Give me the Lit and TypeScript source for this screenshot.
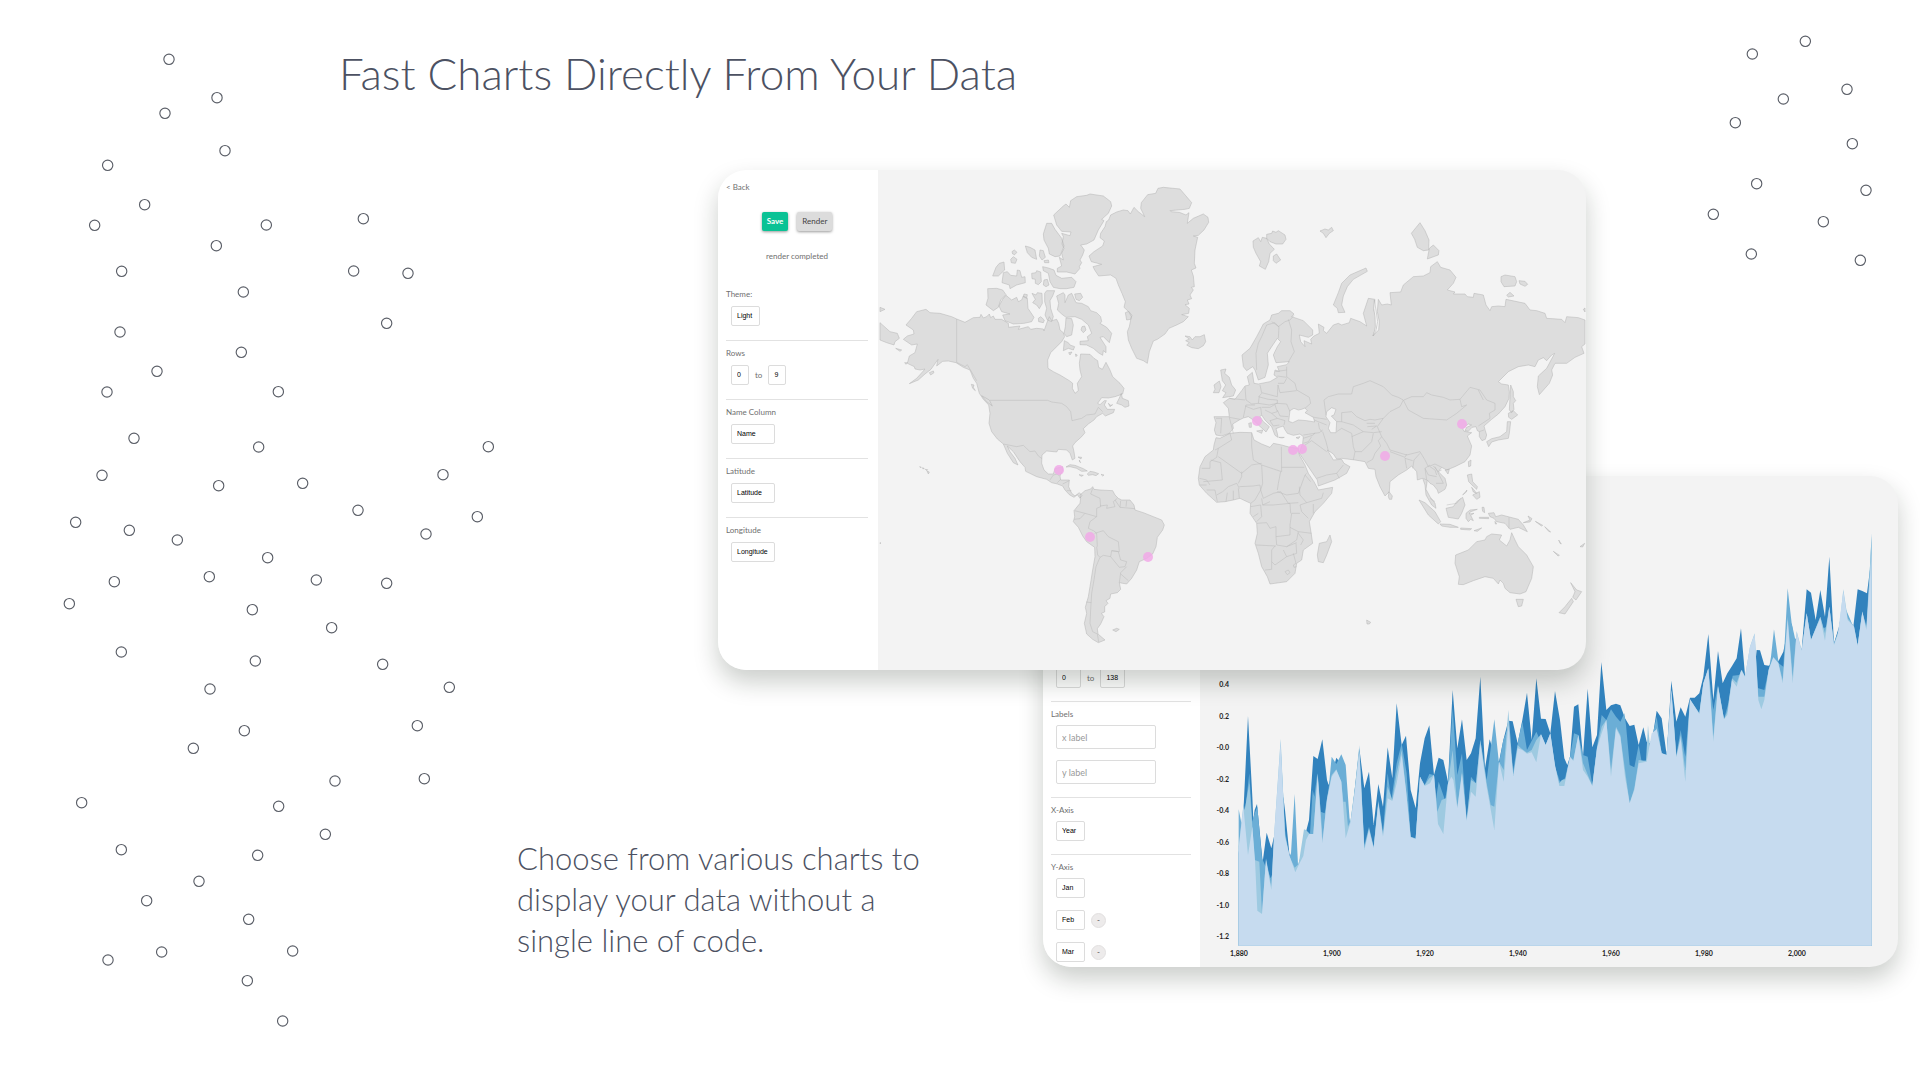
import { LitElement, html, svg, css } from "lit";
import { customElement } from "lit/decorators.js";

type Pt = [number, number];

const pairs = (s: string): Pt[] =>
  s.trim().split(/\s+/).map((p) => p.split(",").map(Number) as Pt);

/* ---------- decorative dots ---------- */

const DOTS_LEFT = pairs(`
327,58 471,173 315,220 495,332 143,376 254,494 104,556 619,555 469,617 185,694 550,756 910,536
881,693 1044,700 980,850 180,876 544,937 291,994 141,1056 655,1055 222,1195 596,1221 1285,1220
126,1306 476,1337 728,1330 1149,1304 894,1411 1252,1430 47,1447 208,1471 1098,1482 352,1500
623,1553 163,1625 448,1610 769,1620 980,1630 28,1691 577,1709 815,1763 184,1836 586,1863 968,1873
450,1947 1168,1942 1072,2057 553,2072 400,2125 825,2223 1093,2216 65,2288 656,2299 796,2383
184,2429 593,2446 417,2524 260,2582 566,2638 698,2733 305,2736 144,2760 562,2822 668,2943`);

const DOTS_RIGHT = pairs(`
157,162 316,124 250,297 441,268 106,368 457,431 170,551 498,571 40,643 370,665 154,762 481,781`);

/* ---------- world map ---------- */

const AMERICAS = `
M709,155 716,150 722,135 740,126 760,120 774,122 781,132 792,112 805,125 824,140 812,115 814,98 833,74 857,70 864,55 880,52 930,57 948,78 965,98 958,115 945,118 900,122 903,125 928,127 948,135 957,128 952,160 970,145 1000,132 1014,142 1016,157 1002,180 985,196 970,198 983,202 975,240 973,280 978,294 964,300 970,318 973,350 964,352 970,360 960,375 965,386 952,390 957,402 945,404 958,415 956,430 935,434 955,440 940,455 920,465 897,475 885,492 862,508 850,513 838,545 832,580 820,572 800,565 785,535 775,510 772,485 778,470 784,440 776,425 762,412 766,395 756,370 745,345 738,325 722,315 686,318 674,300 669,290 695,283 664,275 657,258 672,245 698,228 703,213 690,203 692,190 705,170Z
M766,428 776,424 786,436 782,448 770,450Z
M945,498 960,500 967,510 975,500 990,500 1003,494 1007,515 1000,527 985,536 965,533 950,525 958,518 947,512 958,507Z
M551,135 580,108 588,102 598,112 602,92 620,80 650,76 660,72 700,78 722,95 725,108 715,130 695,148 702,152 685,180 672,210 650,222 632,225 643,240 638,255 630,270 635,278 628,290 630,295 615,312 590,306 562,306 562,295 575,288 568,262 580,270 575,250 582,235 576,222 580,200 575,190 600,197 603,186 575,184 560,165Z
M530,160 545,160 555,178 575,205 582,228 570,258 555,260 538,252 535,235 522,210 520,192Z
M466,228 480,232 495,240 500,268 485,262 472,248Z M510,240 520,242 526,262 516,270 508,258Z M522,272 535,270 537,278 524,278Z
M426,245 433,240 441,247 434,254 428,252Z M422,268 430,260 441,268 436,280 424,278Z M402,276 404,300 385,318 368,318 378,292 388,280Z
M400,308 412,305 422,316 440,318 442,300 450,302 455,322 465,320 466,338 440,345 420,356 418,345 396,338Z
M485,310 498,308 500,302 512,306 514,335 505,344 496,340 496,328 486,326Z M522,330 532,328 537,345 528,350 520,345Z
M518,290 535,294 552,300 558,316 575,325 605,322 618,335 612,352 590,356 570,356 550,352 540,335 535,310 520,302Z
M353,356 380,355 398,360 408,374 392,390 385,412 370,422 348,405 354,385Z
M408,376 425,390 440,382 445,395 455,390 460,378 472,385 474,415 492,442 485,455 462,460 430,462 405,452 398,435 420,432 395,425 387,408 398,388Z
M462,372 472,374 470,385 460,380Z M486,370 498,375 502,368 516,370 517,400 508,416 500,405 488,398 496,388Z
M524,370 530,362 554,362 548,378 540,392 542,415 550,440 545,455 532,450 525,435 530,415 524,395Z M505,445 512,440 523,450 520,458 506,455Z
M560,378 580,368 585,375 585,398 595,375 605,370 612,385 618,398 635,400 655,410 662,422 680,428 692,440 695,455 690,460 710,472 725,490 718,518 700,500 690,502 708,530 708,548 700,542 698,556 685,548 670,535 650,525 630,524 630,514 655,512 652,500 665,490 655,465 635,448 615,440 588,442 575,432 562,420 566,400Z
M614,372 632,370 638,382 628,392 618,388Z M636,470 644,468 648,480 640,488 633,480Z M588,444 605,446 610,465 605,495 590,500 582,490 586,470Z
M583,512 595,518 600,525 614,530 610,540 595,535 580,542Z M596,548 606,546 600,555Z M616,552 622,555 618,560Z
M168,418 180,428 210,430 245,440 260,447 285,457 310,443 330,442 333,433 340,444 350,440 358,432 362,443 370,438 375,448 395,448 415,460 416,472 450,468 445,478 475,470 482,478 500,475 520,477 522,483 530,460 538,440 545,452 560,448 566,460 570,480 580,488 584,500 575,515 560,530 542,548 533,570 534,595 550,605 570,615 598,632 608,640 607,655 615,670 625,662 622,640 635,620 630,600 628,580 632,552 660,553 672,565 683,572 686,592 697,598 708,577 720,600 728,620 750,640 762,655 758,672 735,680 715,684 695,683 683,700 690,704 703,692 709,692 703,705 712,718 734,718 730,728 706,738 698,730 680,740 672,750 655,762 640,776 645,788 635,800 615,818 608,828 612,845 615,865 607,870 600,850 590,840 565,838 560,846 530,843 516,855 515,880 522,900 535,912 550,912 555,896 578,890 577,902 570,918 572,930 598,930 596,950 605,970 615,978 628,968 636,976 630,985 622,974 612,982 598,974 585,960 578,948 562,942 545,938 530,928 500,920 467,904 465,892 450,875 430,845 412,828 420,845 435,865 444,885 430,878 412,850 400,822 382,807 365,785 357,760 360,730 356,705 340,688 328,670 320,640 310,625 300,600 280,592 258,578 235,573 218,574 200,588 204,568 183,598 165,612 145,630 118,641 140,625 158,605 165,597 150,600 135,597 133,590 112,580 118,558 135,548 142,522 125,525 100,508 112,498 132,492 130,480 108,465 125,445 140,425Z
M304,643 312,645 310,652 316,662 308,655Z M335,677 358,690 367,708 350,695Z M178,608 190,603 192,608 182,615Z
M30,458 60,485 82,490 88,505 75,515 72,525 50,518 30,510Z M77,535 95,540 90,544Z M30,412 45,418 30,425Z M104,578 112,578 108,583Z
M740,700 748,684 754,670 757,685 775,692 777,708 765,712 755,705Z M715,700 722,706 728,704 720,710Z
M588,891 600,884 615,886 640,896 652,903 635,904 620,895 600,890Z M652,912 660,904 672,906 686,911 678,917 668,914 655,916Z M627,914 640,916 634,919Z M693,913 702,915 698,918Z
M624,861 635,862 633,867Z M628,870 632,878 629,876Z M149,890 154,892 150,892Z M158,893 163,896 158,896Z M166,898 173,899 170,902Z M171,903 178,906 175,912Z
M630,975 645,962 662,957 668,950 672,958 690,960 728,962 735,975 745,985 755,990 780,990 792,1005 795,1020 820,1028 850,1040 875,1050 883,1065 878,1080 862,1102 858,1130 848,1152 830,1165 808,1175 800,1200 785,1225 770,1242 748,1238 752,1258 742,1268 722,1272 720,1285 708,1292 714,1300 704,1310 704,1326 694,1330 702,1340 692,1362 682,1376 684,1392 705,1410 685,1418 668,1408 650,1392 643,1360 650,1330 646,1312 655,1280 660,1250 668,1200 675,1160 674,1132 650,1115 638,1098 625,1072 610,1055 614,1040 612,1022 630,1000 632,985Z
M728,1380 740,1375 748,1378 738,1385Z M30,1118 33,1119 30,1121Z`;

const AMERICAS_BORDERS = `
M260,447 260,577 285,590 292,584 320,632 M360,691 533,691 545,696 575,700 590,710 602,725 606,752 635,745 650,735 675,732 685,712 698,725
M400,822 440,830 460,826 480,845 495,843 505,858 516,866 M540,930 550,915 562,912 568,918 M562,938 572,928 M578,942 598,932 M590,962 604,962
M680,1130 683,1155 690,1162 678,1190 672,1230 665,1270 662,1320 660,1360 668,1385 682,1392 686,1416
M668,955 662,972 690,985 692,1010 680,1015 680,1040 660,1055 655,1075 672,1083 680,1090 682,1130
M612,1048 630,1046 645,1030 680,1040 M614,1022 645,1030 M690,1008 712,1005 710,1015 735,1010 730,995 742,985 M735,990 750,1012 795,1016 M752,992 750,1012 M770,992 768,1010
M674,1090 700,1082 715,1100 745,1115 748,1145 725,1142 722,1160 700,1156 690,1162 M725,1142 745,1145 752,1170 770,1175 765,1190 748,1192 722,1160 M770,1190 752,1208 748,1238 M752,1212 775,1232
M648,1296 664,1298`;

const OLD_WORLD = `
M189,213 205,203 212,215 217,202 230,205 238,222 253,238 240,250 236,275 226,298 208,288 212,275 198,250 190,232Z
M230,193 245,190 248,183 258,187 265,182 285,195 288,208 278,222 258,222 240,215 230,205Z M250,258 260,252 272,270 258,280 250,272Z
M390,183 405,177 415,180 425,172 430,182 418,190 408,203 400,190Z
M430,405 445,368 455,340 480,315 528,294 532,304 490,328 472,350 460,378 455,405 465,427 445,428 442,415Z
M664,190 690,158 705,182 717,210 716,240 700,242 682,232 674,208Z M718,235 730,225 747,242 745,255 712,267Z
M933,320 945,315 975,320 980,335 975,348 942,350 933,335Z M987,332 1005,334 1013,343 1005,349 990,342Z M950,376 960,367 972,378 955,381Z M1180,418 1185,414 1185,426Z
M92,600 108,597 104,610 118,622 125,645 137,660 130,678 98,683 108,668 97,662 107,645 97,632Z M72,645 88,633 93,650 87,668 70,668 75,658Z
M156,555 180,535 200,500 220,462 240,450 245,435 265,430 275,422 300,422 312,432 305,440 340,452 368,480 368,495 355,502 328,495 332,515 345,530 342,512 365,522 362,508 372,498 388,490 385,462 402,472 400,482 410,490 430,465 445,460 455,465 478,458 482,445 510,455 530,468 520,430 535,385 555,388 552,420 560,450 558,475 548,498 566,480 568,455 562,425 565,388 575,405 592,402 604,405 600,368 632,366 640,345 670,320 700,318 720,308 722,290 742,275 752,292 780,300 798,322 790,340 772,360 795,366 790,372 825,372 832,380 850,382 852,370 880,375 888,405 900,422 905,410 925,408 945,410 948,388 1005,400 1020,420 1040,422 1065,430 1070,445 1115,448 1125,458 1130,440 1165,443 1185,450 1185,522 1175,530 1182,550 1155,562 1130,580 1095,580 1085,600 1088,615 1078,640 1048,674 1042,650 1045,618 1070,595 1094,550 1085,555 1070,572 1060,563 1045,570 1035,590 1015,585 985,590 955,605 925,635 935,642 955,645 958,665 957,685 945,710 925,732 905,748 882,768 886,782 890,795 886,808 876,812 868,800 868,785 862,782 858,770 846,772 835,784 825,782 830,772 845,765 835,762 818,776 822,784 845,788 832,798 845,828 840,855 825,875 795,890 770,900 755,892 745,905 765,925 770,945 765,958 745,970 742,960 730,945 720,940 712,930 708,958 720,980 735,1000 738,1015 725,1005 708,975 705,945 698,925 682,930 680,905 665,888 650,900 625,915 600,935 598,965 585,978 570,950 558,920 555,898 535,895 525,875 495,870 455,865 440,867 430,852 415,842 412,840 430,870 455,868 462,880 480,890 470,910 435,930 385,948 382,930 365,905 345,875 328,850 338,820 340,800 330,792 310,796 292,790 284,778 280,768 268,772 258,776 262,790 264,802 255,796 245,770 225,750 215,735 210,740 220,755 238,770 228,786 222,780 205,765 190,750 175,740 160,744 148,750 128,762 130,775 118,790 95,798 78,795 73,780 78,758 72,740 118,740 115,715 100,698 118,685 135,688 155,662 165,648 178,645 172,620 187,607 192,640 205,642 240,635 262,622 252,615 255,600 268,604 262,590 290,584 298,575 258,578 250,555 262,530 272,515 262,505 245,530 232,550 235,585 225,622 205,630 195,600 188,590 170,602 160,590Z
M78,803 90,805 120,790 150,787 185,788 192,810 215,822 240,832 250,820 275,825 300,832 325,835 328,855 345,885 355,910 372,935 385,960 428,952 425,970 400,1000 375,1025 358,1055 362,1080 368,1120 340,1140 335,1170 320,1180 315,1210 290,1235 240,1242 232,1220 215,1190 205,1150 195,1120 202,1090 200,1060 180,1030 182,1000 160,990 150,985 130,990 105,995 80,997 50,970 28,945 25,925 30,890 45,860 70,840 72,825Z
M420,1095 425,1115 410,1155 400,1178 385,1175 382,1155 388,1120 410,1115Z M597,965 607,978 605,988 598,988 595,980Z
M687,990 705,998 735,1025 752,1055 745,1062 715,1035Z M750,1062 780,1063 805,1072 780,1072 755,1068Z M768,1015 790,1010 800,995 818,982 825,1005 815,1030 805,1047 775,1042Z
M828,1030 840,1020 862,1018 840,1026 838,1032 852,1030 842,1036 850,1052 842,1048 835,1055 828,1045Z M876,1012 882,1012 884,1028 878,1024Z M868,1042 896,1042 896,1046 868,1045Z M812,1074 845,1076 840,1080 812,1078Z M852,1082 875,1074 862,1084Z
M832,915 845,912 848,935 862,950 860,958 846,945 836,935Z M848,975 868,965 870,982 860,988Z M818,975 831,960 829,966Z M845,952 852,960 860,970 850,966Z
M895,1030 912,1028 917,1040 935,1035 985,1048 1000,1065 1012,1085 985,1072 960,1078 945,1060 920,1055 912,1045 900,1040Z M1000,1058 1020,1050 1014,1038 1026,1046 1020,1056Z M1036,1054 1058,1066 1054,1068Z M1064,1070 1082,1086 1076,1084Z M1106,1110 1114,1122 1110,1120Z M1090,1144 1108,1156 1104,1158Z M1170,1130 1184,1120 1178,1131Z M915,1054 920,1062 916,1062Z
M835,875 843,870 842,888 836,890Z M765,900 778,898 774,912Z M890,815 905,806 930,800 950,785 952,755 962,755 958,790 955,805 925,810 905,816 896,830Z M955,730 970,722 983,735 965,748 956,742Z M962,645 970,665 970,680 977,692 970,700 972,718 965,728 958,720Z
M797,1155 835,1140 860,1115 885,1110 890,1100 905,1092 935,1095 928,1110 950,1128 960,1110 965,1088 975,1110 985,1130 1010,1155 1030,1190 1025,1225 1008,1265 990,1272 960,1268 945,1255 940,1240 930,1230 925,1242 910,1225 885,1220 850,1232 820,1244 805,1243 808,1220 795,1180Z
M978,1288 1000,1288 995,1308 985,1310Z M1142,1238 1160,1260 1175,1265 1158,1290 1148,1282 1155,1265Z M1145,1285 1150,1295 1125,1332 1107,1328 1125,1310Z M530,1350 542,1357 538,1362 531,1362Z
M176,760 184,758 184,772 178,772Z M200,783 218,780 215,790Z M266,802 283,802 276,804Z M318,803 330,800 325,806Z`;

const OLD_WORLD_BORDERS = `
M265,505 267,470 245,455 M200,600 198,550 205,520 215,500 230,465 255,458 265,470 285,455 300,450 312,436 M295,448 305,480 303,515 313,545 295,576
M290,590 290,620 300,628 315,640 320,660 358,682 362,700 345,715 M262,618 290,622 M256,605 290,600 M264,640 282,640 290,625 M264,645 270,668 320,662 M210,645 215,668 262,680 264,645
M165,650 168,690 185,702 205,700 208,678 215,670 M118,685 165,690 M160,742 168,705 195,705 M205,680 235,688 262,690 262,700 238,705 205,700 M165,708 190,718 212,712 215,735 M215,712 240,712 260,700 290,702 300,725 M225,720 245,730 262,745 240,752 M262,720 270,738 295,740 M255,705 262,725 245,730 M78,745 95,745 92,790 M130,790 118,742 150,748
M262,745 285,752 282,765 M240,752 250,768 268,765 M372,750 410,765 M360,740 410,748 M385,758 388,775 395,785 M340,795 388,788 398,780
M408,735 402,690 415,680 445,672 485,672 490,650 520,640 540,632 580,650 605,675 625,682 640,690 630,710 600,725 580,745 555,750 540,748 525,752 500,740 485,725 455,728 455,755 440,755
M642,690 665,680 700,680 710,668 725,675 760,682 780,690 810,688 815,710 830,705 800,730 770,750 700,745 655,720 640,690
M810,688 840,652 870,660 890,690 915,700 915,720 898,730 900,745 865,768 M868,785 882,780 M865,660 880,690
M580,745 562,770 575,800 590,820 600,840 650,855 690,845 705,870 715,890 735,882 755,892 M600,845 645,862 650,852
M575,800 565,812 572,828 555,850 548,868 530,878 M440,785 455,775 485,790 490,830 495,845 490,870 M485,800 520,785 550,788 575,785 M550,790 545,815 515,845 495,845 M455,755 490,765 520,785 M530,760 555,760 M532,770 560,768 545,778
M340,805 370,795 375,788 M340,820 355,815 365,800 M365,812 410,845 M345,825 365,812 M398,785 408,815 415,842 M380,925 410,915 440,910 460,885 M440,910 448,925
M668,895 672,870 690,850 M645,865 650,895 M645,865 668,872 M700,925 710,930 705,895 720,885 M720,890 735,900 740,915 M705,895 715,915 740,920 M738,940 760,940 M730,888 745,905 755,900 M735,890 760,940 M770,1005 800,1000 812,985 M957,1042 957,1075 M720,985 735,995
M120,790 125,810 85,835 75,840 M35,895 60,895 60,875 80,862 85,835 M85,860 155,910 185,885 215,880 M62,870 92,878 97,930 40,935 M185,788 185,830 190,870 215,885 275,905 274,830 M275,892 343,892 M272,905 265,940 262,960 M215,885 218,940 212,960 M145,940 155,920 155,905
M28,925 50,930 60,945 M30,945 50,945 M50,960 75,960 82,995 M80,975 98,965 115,950 140,940 148,955 M108,995 112,968 M130,990 130,962 M148,985 145,955 M148,950 190,948 210,945 212,960 195,990 182,1000
M212,960 220,985 250,970 272,965 M262,965 290,975 325,970 345,915 350,910 M345,915 362,935 M328,950 330,975 350,998 395,985 400,968 M370,1002 370,1030 M350,998 330,1005 335,1025 355,1045 M272,965 295,1000 325,998 M215,985 218,1005 250,1005 300,1000 302,1030
M182,1010 212,1005 215,1040 200,1055 M218,1005 240,995 M190,1040 205,1030 M200,1060 230,1058 240,1075 258,1070 258,1100 300,1095 300,1065 305,1030 330,1030 M198,1125 258,1128 M258,1100 260,1125 290,1130 320,1110 325,1085 300,1072 M325,1085 365,1090 M325,1090 340,1110 332,1125
M245,1140 245,1198 225,1200 M245,1175 255,1185 290,1160 320,1150 318,1120 M255,1128 245,1140 M290,1160 280,1140 M290,1130 320,1118 M310,1150 318,1180 M285,1205 295,1200 300,1208 292,1214Z M318,1180 310,1185 312,1192 320,1190`;

const SEAS = `
M296,754 300,722 312,715 325,720 335,718 345,714 352,722 345,728 370,742 374,756 350,752 325,750 308,758Z
M410,725 425,713 438,718 432,735 424,738 440,755 438,788 422,788 415,775 420,758 408,740Z
M553,390 558,420 563,455 557,485 550,498 556,470 555,440 551,415Z`;

const PINS = pairs("1059,470 1090,537 1148,557 1257,421 1293,450 1302,449 1385,456 1462,424");

/* ---------- area chart ---------- */

/* Each series is traced at three units per pixel: an earlier and a later stretch of years. */
const join = (early: string, late: string): string =>
  [...pairs(early), ...pairs(late).map(([x, y]) => [x + 1020, y - 510] as Pt)]
    .map(([x, y]) => `${x},${y}`)
    .join(" ");

const SERIES = [
  {
    name: "s1",
    points: join(
      `116,640 130,520 144,228 157,470 160,540 164,510 171,492 188,665 200,578 214,625 222,590 230,640 250,470 255,510 268,640 284,700 300,680 314,590 318,575 327,540 340,348 353,357 367,298 381,420 386,435 404,372 409,353 416,362 437,480 452,560 465,440 478,325 493,445 507,395 521,555 535,432 549,500 563,322 577,415 590,190 605,315 618,287 632,450 647,505 660,370 674,295 688,256 702,405 716,353 730,360 744,425 758,150 772,325 786,238 800,360 813,340 827,295 841,110 855,385 869,298 876,320 883,400 890,360 897,365 910,300 925,242 938,244 953,310 967,240 981,158 995,300 1009,115 1023,236 1037,237 1051,280`,
      `45,663 60,750 73,865 82,885 90,860 102,710 115,703 129,860 143,656 157,832 171,795 184,576 199,720 213,706 228,701 241,706 255,745 269,768 283,764 296,825 310,772 320,815 330,820 338,800 350,722 365,745 380,855 394,632 409,755 422,712 436,740 450,683 464,683 478,670 490,620 505,492 520,690 534,543 548,640 562,610 576,588 590,565 603,475 615,615 640,640 650,540 660,541 673,585 686,587 700,575 716,572 730,545 743,480 755,460 770,560 785,540 800,358 813,368 827,450 841,360 855,440 868,260 882,520 897,470 910,400 925,480 940,470 953,358 967,363 981,370 995,260`
    ),
  },
  {
    name: "s2",
    points: join(
      `116,508 124,548 132,540 148,400 157,545 164,520 172,500 186,655 196,678 200,680 212,715 218,700 230,640 242,320 255,570 268,650 273,640 284,462 294,675 305,640 318,580 330,582 338,450 343,470 352,400 362,515 374,520 386,445 395,350 409,372 424,343 437,375 450,555 465,445 478,350 493,615 507,560 521,620 535,480 549,575 563,400 574,480 590,370 605,310 620,400 632,590 647,595 660,410 674,435 688,402 702,405 706,490 716,425 735,480 744,430 758,205 772,405 786,340 800,540 813,410 828,430 841,300 860,420 869,350 883,238 897,370 910,300 925,260 938,400 955,300 967,245 981,330 1009,275 1020,300 1037,315 1051,285`,
      `45,890 60,935 75,925 90,860 102,790 115,795 129,855 143,860 157,945 171,830 185,735 199,750 213,718 228,740 241,755 253,730 258,765 269,885 283,892 296,825 305,875 320,870 330,830 350,740 365,850 380,855 394,660 409,855 422,780 436,860 450,690 478,730 490,640 505,598 520,720 534,645 552,748 565,700 578,617 598,615 606,600 616,620 640,640 655,655 673,660 686,600 693,560 702,478 716,580 730,590 743,355 755,460 765,505 772,510 785,540 800,430 813,510 841,440 850,475 860,470 868,410 882,520 897,480 910,400 940,470 953,525 967,430 981,470 995,190`
    ),
  },
  {
    name: "s3",
    points: join(
      `116,620 124,548 131,490 134,510 148,430 157,560 164,660 178,665 186,820 198,655 214,740 222,590 242,296 255,585 268,648 284,683 296,672 312,568 318,570 330,582 340,582 353,400 362,515 368,600 381,475 395,405 409,388 424,425 430,485 437,485 444,560 452,540 465,440 478,316 493,625 507,565 521,622 535,485 549,585 563,440 577,480 590,400 605,330 618,450 632,590 647,596 660,410 674,436 688,415 702,405 712,515 725,480 738,475 744,430 758,330 772,500 786,395 800,541 813,420 828,430 841,300 860,430 872,495 883,500 897,365 911,390 925,210 940,408 953,315 963,325 981,338 995,330 1009,300 1023,283 1037,315 1051,280`,
      `45,890 58,940 66,930 76,928 90,862 100,870 115,795 129,880 157,948 171,835 185,770 199,750 213,900 228,770 241,795 255,900 269,1000 283,955 296,870 318,873 324,765 330,830 350,774 365,850 380,855 394,660 409,860 422,795 436,900 450,688 478,730 490,640 505,595 520,800 534,648 552,748 562,725 576,625 590,638 604,600 615,620 630,530 644,490 655,680 664,680 673,680 686,600 700,562 715,578 728,630 743,440 758,620 770,483 785,541 800,430 813,510 841,440 855,490 868,410 882,522 897,480 910,358 923,445 942,468 953,526 967,424 979,475 995,200`
    ),
  },
  {
    name: "s4",
    points: join(
      `116,625 130,500 144,645 157,560 165,660 172,812 186,822 198,660 214,750 222,590 242,305 255,590 270,652 286,697 296,675 310,648 318,600 327,582 340,582 353,405 367,610 381,480 395,410 409,390 424,425 437,595 452,545 465,450 478,335 493,630 507,570 521,625 535,490 549,590 563,475 577,483 590,430 605,345 618,450 632,592 647,597 660,410 674,438 690,430 702,405 714,552 730,582 744,430 754,410 760,420 772,505 786,400 800,542 813,455 827,470 841,310 860,440 883,570 897,365 911,425 925,255 940,408 953,325 967,330 981,341 995,337 1009,367 1023,283 1037,315 1051,280`,
      `45,885 58,948 73,948 90,860 100,873 115,795 129,900 143,920 157,948 171,835 185,790 199,750 213,920 228,775 241,800 255,920 269,1000 283,960 296,880 320,875 335,790 350,778 365,850 380,855 394,660 409,862 422,805 436,935 450,688 478,732 490,640 505,595 520,815 534,650 552,748 562,735 576,630 590,650 604,600 615,620 630,530 644,492 655,690 664,718 673,690 686,600 700,562 715,580 728,640 743,450 758,640 770,487 785,542 800,430 813,510 841,445 855,512 868,410 882,525 893,495 910,364 923,450 942,470 953,527 967,425 979,480 995,250`
    ),
  },
];

const Y_TICKS = ["0.4", "0.2", "-0.0", "-0.2", "-0.4", "-0.6", "-0.8", "-1.0", "-1.2"];
const X_TICKS = ["1,880", "1,900", "1,920", "1,940", "1,960", "1,980", "2,000"];

const formStyles = css`
  :host {
    display: block;
    color: #6f6f6f;
    font: 8px/10px Lato, sans-serif;
  }
  .section {
    display: flex;
    flex-direction: column;
    gap: 6px;
    padding: 7px 0 13px;
    border-top: 1px solid #e2e2e2;
  }
  .section.first {
    border-top: 0;
  }
  .row {
    display: flex;
    align-items: center;
    gap: 6px;
    padding-left: 5px;
  }
  select,
  input {
    box-sizing: border-box;
    height: 20px;
    margin: 0;
    padding: 0 5px;
    border: 1px solid #dcdcdc;
    border-radius: 2px;
    background: #fff;
    color: #000;
    font: 7px/18px "Liberation Sans", sans-serif;
    appearance: none;
  }
  .tiny {
    width: 18px;
  }
  .mid {
    width: 25px;
  }
  .short {
    width: 29px;
  }
  .long {
    width: 44px;
  }
`;

@customElement("world-map")
class WorldMap extends LitElement {
  static styles = css`
    :host {
      display: block;
    }
    svg {
      display: block;
      width: 100%;
      height: auto;
    }
    .land {
      fill: #ddd;
      stroke: #b0b0b0;
      stroke-width: 1.4;
      stroke-linejoin: round;
    }
    .border {
      fill: none;
      stroke: #b8b8b8;
      stroke-width: 1.4;
      stroke-linejoin: round;
    }
    .sea {
      fill: #f3f3f3;
      stroke: #b0b0b0;
      stroke-width: 1.4;
    }
    .pin {
      fill: #f1a9e8;
      fill-opacity: 0.85;
    }
  `;

  render() {
    return html`<svg viewBox="878 170 708 500" role="img" aria-label="World map">
      <g transform="translate(870 170) scale(.33333)">
        <path class="land" d=${AMERICAS}></path>
        <path class="border" d=${AMERICAS_BORDERS}></path>
      </g>
      <g transform="translate(1190 170) scale(.33333)">
        <path class="land" d=${OLD_WORLD}></path>
        <path class="border" d=${OLD_WORLD_BORDERS}></path>
        <path class="sea" d=${SEAS}></path>
      </g>
      ${PINS.map(([x, y]) => svg`<circle class="pin" cx=${x} cy=${y} r="5"></circle>`)}
    </svg>`;
  }
}

@customElement("area-chart")
class AreaChart extends LitElement {
  static styles = css`
    :host {
      display: block;
    }
    svg {
      display: block;
      width: 100%;
      height: auto;
    }
    text {
      fill: #222;
      font: 700 7px Lato, sans-serif;
    }
    .y {
      text-anchor: end;
    }
    .x {
      text-anchor: middle;
    }
    .s1 {
      fill: #3182bd;
    }
    .s2 {
      fill: #6baed6;
    }
    .s3 {
      fill: #9ecae1;
    }
    .s4 {
      fill: #c6dbef;
    }
  `;

  render() {
    return html`<svg viewBox="1200 476 698 491" role="img" aria-label="Area chart">
      <g transform="translate(1200 640) scale(.33333)">
        ${SERIES.map(
          (s) => svg`<polygon class=${s.name} points="116,917 ${s.points} 2015,917"></polygon>`
        )}
      </g>
      ${Y_TICKS.map((t, i) => svg`<text class="y" x="1229" y=${687 + i * 31.5}>${t}</text>`)}
      ${X_TICKS.map((t, i) => svg`<text class="x" x=${1239 + i * 93} y="956">${t}</text>`)}
    </svg>`;
  }
}

@customElement("map-form")
class MapForm extends LitElement {
  static styles = [
    formStyles,
    css`
      :host {
        padding: 12px 10px 0 8px;
      }
      a {
        color: inherit;
        text-decoration: none;
      }
      .top {
        display: flex;
        flex-direction: column;
        margin-bottom: 21px;
      }
      .section {
        gap: 7px;
        padding-bottom: 14px;
      }
      .actions {
        display: flex;
        justify-content: center;
        gap: 9px;
        margin: 20px 0;
      }
      button {
        height: 19px;
        padding: 0 5px;
        border: 0;
        border-radius: 2px;
        background: #dcdcdc;
        box-shadow: 0 1px 3px rgba(0, 0, 0, 0.4);
        color: #444;
        font: 8px/19px Lato, sans-serif;
      }
      .save {
        background: #0ac295;
        color: #fff;
        font-weight: 700;
      }
      .status {
        text-align: center;
      }
    `,
  ];

  private field(id: string, label: string, value: string, size: string, first = false) {
    return html`<div class="section ${first ? "first" : ""}">
      <label for=${id}>${label}</label>
      <div class="row">
        <select id=${id} class=${size}><option>${value}</option></select>
      </div>
    </div>`;
  }

  render() {
    return html`
      <div class="top">
        <a href="#">&lt; Back</a>
        <div class="actions">
          <button class="save">Save</button>
          <button>Render</button>
        </div>
        <div class="status">render completed</div>
      </div>
      ${this.field("theme", "Theme:", "Light", "short", true)}
      <div class="section">
        <label for="from">Rows</label>
        <div class="row">
          <select id="from" class="tiny"><option>0</option></select>
          <label for="until">to</label>
          <select id="until" class="tiny"><option>9</option></select>
        </div>
      </div>
      ${this.field("name", "Name Column", "Name", "long")}
      ${this.field("lat", "Latitude", "Latitude", "long")}
      ${this.field("lng", "Longitude", "Longitude", "long")}
    `;
  }
}

@customElement("chart-form")
class ChartForm extends LitElement {
  static styles = [
    formStyles,
    css`
      :host {
        display: flex;
        flex-direction: column;
        justify-content: flex-end;
        padding: 0 9px 5px 8px;
      }
      .fields {
        display: flex;
        flex-direction: column;
        gap: 12px;
      }
      .fields.text {
        gap: 11px;
      }
      .last {
        padding-bottom: 0;
      }
      input {
        width: 100px;
        height: 24px;
        font: 9px/22px Lato, sans-serif;
      }
      input::placeholder {
        color: #999;
      }
      button {
        width: 15px;
        height: 15px;
        padding: 0;
        border: 1px solid #e2e0e0;
        border-radius: 50%;
        background: #edebeb;
        color: #444;
        font: 8px/11px Lato, sans-serif;
      }
    `,
  ];

  render() {
    return html`
      <div class="section first">
        <div class="row">
          <select id="from" class="mid" aria-label="First row"><option>0</option></select>
          <label for="until">to</label>
          <select id="until" class="mid"><option>138</option></select>
        </div>
      </div>
      <div class="section">
        <label for="xl">Labels</label>
        <div class="fields text">
          <div class="row"><input id="xl" placeholder="x label" /></div>
          <div class="row"><input aria-label="y label" placeholder="y label" /></div>
        </div>
      </div>
      <div class="section">
        <label for="x">X-Axis</label>
        <div class="row"><select id="x" class="short"><option>Year</option></select></div>
      </div>
      <div class="section last">
        <label for="y0">Y-Axis</label>
        <div class="fields">
          ${["Jan", "Feb", "Mar"].map(
            (m, i) => html`<div class="row">
              <select id="y${i}" class="short" aria-label=${m}><option>${m}</option></select>
              ${i ? html`<button aria-label="Remove ${m}">-</button>` : ""}
            </div>`
          )}
        </div>
      </div>
    `;
  }
}

@customElement("app-root")
class AppRoot extends LitElement {
  static styles = css`
    :host {
      display: block;
      background: #fff;
    }
    .slide {
      position: relative;
      box-sizing: border-box;
      min-height: 100vh;
      overflow: hidden;
      display: grid;
      grid-template-columns:
        minmax(0, 339fr) minmax(0, 178fr) minmax(0, 201fr) minmax(0, 325fr)
        minmax(0, 543fr) minmax(0, 312fr) minmax(0, 22fr);
      grid-template-rows: 170px 306px 194px 297px auto;
      color: #4c5162;
      font-family: Lato, sans-serif;
    }
    .dots {
      position: absolute;
      top: 0;
      fill: #fff;
      stroke: #5a5e67;
      stroke-width: 3.4;
    }
    .dots.left {
      left: 0;
    }
    .dots.right {
      right: 0;
    }
    h1 {
      grid-area: 1 / 2 / 2 / 7;
      margin: 0;
      padding-top: 45px;
      font-size: 44px;
      line-height: 56px;
      font-weight: 300;
      z-index: 1;
    }
    .lead {
      grid-area: 4 / 3 / 5 / 5;
      margin: 0;
      align-self: start;
      padding-top: 168px;
      width: 420px;
      font-size: 31px;
      line-height: 41px;
      font-weight: 300;
    }
    .card {
      display: grid;
      overflow: hidden;
      border-radius: 28px;
      background: #f3f3f3;
      box-shadow: 0 12px 24px rgba(20, 30, 20, 0.22);
    }
    .map {
      grid-area: 2 / 4 / 4 / 6;
      grid-template-columns: 160px minmax(0, 1fr);
      z-index: 2;
    }
    .chart {
      grid-area: 3 / 5 / 5 / 7;
      grid-template-columns: 157px minmax(0, 1fr);
    }
    .panel {
      background: #fff;
    }
  `;

  render() {
    return html`<main class="slide">
      <svg class="dots left" width="500" height="1080" aria-hidden="true">
        <g transform="translate(60 40) scale(.33333)">
          ${DOTS_LEFT.map(([x, y]) => svg`<circle cx=${x} cy=${y} r="15.5"></circle>`)}
        </g>
      </svg>
      <svg class="dots right" width="220" height="300" aria-hidden="true">
        <g transform="scale(.33333)">
          ${DOTS_RIGHT.map(([x, y]) => svg`<circle cx=${x} cy=${y} r="15.5"></circle>`)}
        </g>
      </svg>
      <h1>Fast Charts Directly From Your Data</h1>
      <section class="card map">
        <map-form class="panel"></map-form>
        <world-map></world-map>
      </section>
      <section class="card chart">
        <chart-form class="panel"></chart-form>
        <area-chart></area-chart>
      </section>
      <p class="lead">Choose from various charts to display your data without a single line of code.</p>
    </main>`;
  }
}
